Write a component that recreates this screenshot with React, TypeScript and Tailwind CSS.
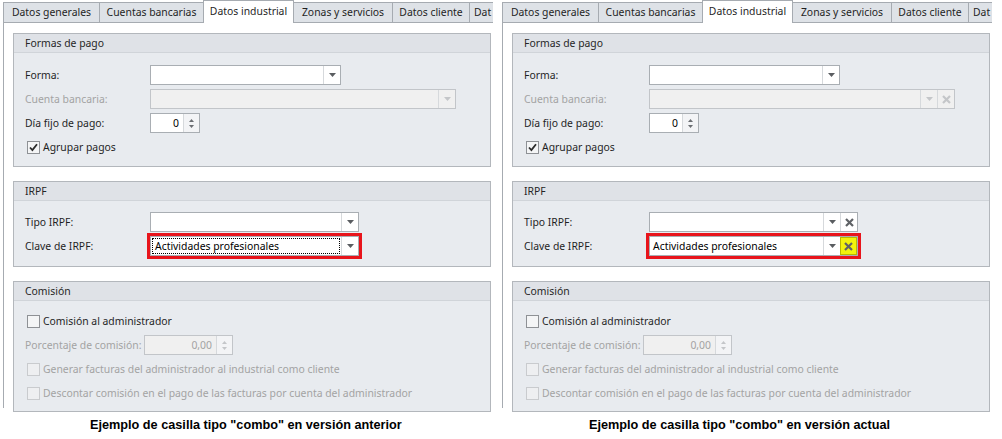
import React from 'react';

type Variant = 'old' | 'new';

const tabs = [
  { label: 'Datos generales', w: 'w-[97px]' },
  { label: 'Cuentas bancarias', w: 'w-[105px]' },
  { label: 'Datos industrial', w: 'w-[91px]', active: true },
  { label: 'Zonas y servicios', w: 'w-[100px]' },
  { label: 'Datos cliente', w: 'w-[78px]' },
  { label: 'Dat', w: 'w-[26px]', cut: true },
];

const Arrow = ({ disabled }: { disabled?: boolean }) => (
  <svg width="7" height="4" viewBox="0 0 7 4">
    <path d="M0 0h7L3.5 4z" fill={disabled ? '#c4c6c9' : '#5a5d61'} />
  </svg>
);

const Cross = ({ disabled }: { disabled?: boolean }) => (
  <svg width="9" height="9" viewBox="0 0 9 9">
    <path d="M1 1l7 7M8 1l-7 7" stroke={disabled ? '#c4c6c9' : '#5f6266'} strokeWidth="2.2" />
  </svg>
);

const DropBtn = ({ disabled }: { disabled?: boolean }) => (
  <div className="w-[17px] h-full flex items-center justify-center border-l border-[#d6d9dc]">
    <Arrow disabled={disabled} />
  </div>
);

const ClearBtn = ({ disabled, highlight }: { disabled?: boolean; highlight?: boolean }) => (
  <div
    className={`w-[17px] h-full flex items-center justify-center border-l ${
      highlight ? 'bg-[#f2f20c] border border-[#b9b900]' : 'border-[#d6d9dc]'
    }`}
  >
    <Cross disabled={disabled} />
  </div>
);

function Combo({
  width,
  value,
  disabled,
  clear,
  dotted,
  highlight,
}: {
  width: string;
  value?: string;
  disabled?: boolean;
  clear?: boolean;
  dotted?: boolean;
  highlight?: boolean;
}) {
  return (
    <div
      className={`${width} h-[20px] flex border ${
        disabled ? 'bg-[#f0f0f0] border-[#c2c5c9]' : 'bg-white border-[#a9aeb3]'
      }`}
    >
      <div className="flex-1 min-w-0 p-px">
        <div
          className={`h-full flex items-center pl-[2px] text-black whitespace-nowrap ${
            dotted ? 'border border-dotted border-black' : ''
          }`}
        >
          {value}
        </div>
      </div>
      <DropBtn disabled={disabled} />
      {clear && <ClearBtn disabled={disabled} highlight={highlight} />}
    </div>
  );
}

function Spin({ width, value, disabled }: { width: string; value: string; disabled?: boolean }) {
  return (
    <div
      className={`${width} h-[20px] flex border ${
        disabled ? 'bg-[#f0f0f0] border-[#c2c5c9]' : 'bg-white border-[#a9aeb3]'
      }`}
    >
      <div className={`flex-1 flex items-center justify-end pr-[4px] ${disabled ? 'text-[#a3a3a3]' : 'text-black'}`}>
        {value}
      </div>
      <div className="w-[16px] flex flex-col items-center justify-center gap-[3px] border-l border-[#d6d9dc] bg-[#f3f4f6]">
        <svg width="5" height="3" viewBox="0 0 5 3">
          <path d="M0 3h5L2.5 0z" fill={disabled ? '#c4c6c9' : '#6b6e72'} />
        </svg>
        <svg width="5" height="3" viewBox="0 0 5 3">
          <path d="M0 0h5L2.5 3z" fill={disabled ? '#c4c6c9' : '#6b6e72'} />
        </svg>
      </div>
    </div>
  );
}

function Check({ label, checked, disabled }: { label: string; checked?: boolean; disabled?: boolean }) {
  return (
    <div className="h-[20px] flex items-center pl-[13px] gap-[3px] whitespace-nowrap">
      <div
        className={`w-[13px] h-[13px] shrink-0 flex items-center justify-center border ${
          disabled ? 'border-[#c9cbce] bg-[#eeeff1]' : 'border-[#8e9195] bg-[#f4f5f6]'
        }`}
      >
        {checked && (
          <svg width="9" height="9" viewBox="0 0 9 9">
            <path d="M1 4.5l2.4 2.6L8 1.2" stroke="#2b2b2b" strokeWidth="1.8" fill="none" />
          </svg>
        )}
      </div>
      <span className={disabled ? 'text-[#a3a3a3]' : 'text-[#1f1f1f]'}>{label}</span>
    </div>
  );
}

function Row({ label, disabled, children }: { label: string; disabled?: boolean; children: React.ReactNode }) {
  return (
    <div className="h-[20px] flex items-center pl-[11px]">
      <span className={`w-[125px] shrink-0 whitespace-nowrap ${disabled ? 'text-[#a3a3a3]' : 'text-[#1f1f1f]'}`}>
        {label}
      </span>
      {children}
    </div>
  );
}

function Group({ title, body, children }: { title: string; body: string; children: React.ReactNode }) {
  return (
    <div className="w-[478px] border border-[#b3b7bc] bg-[#e8ebef]">
      <div className="h-[19px] flex items-center pl-[11px] bg-[#dfe2e7] border-b border-[#d0d4d9] text-[#262626]">
        {title}
      </div>
      <div className={`flex flex-col gap-[4px] ${body}`}>{children}</div>
    </div>
  );
}

function Panel({ variant }: { variant: Variant }) {
  const isNew = variant === 'new';
  return (
    <div className="w-[493px] shrink-0 flex flex-col overflow-hidden">
      <div className="h-[22px] flex items-end pl-[3px]">
        {tabs.map((t, i) => (
          <div
            key={t.label}
            className={`${t.w} shrink-0 flex items-center border-t border-l border-[#a6abb1] text-[#1f1f1f] whitespace-nowrap overflow-hidden ${
              t.cut ? 'justify-start pl-[4px]' : 'justify-center border-r'
            } ${i > 0 ? '-ml-px' : ''} ${
              t.active ? 'h-[23px] bg-white relative z-10 -mb-px pb-[2px]' : 'h-[20px] bg-[#dee2e7]'
            }`}
          >
            {t.label}
          </div>
        ))}
      </div>
      <div className="ml-[3px] h-[386px] border-l border-t border-[#a6abb1] bg-white pt-[10px] pl-[9px] flex flex-col gap-[14px]">
        <Group title="Formas de pago" body="pt-[12px] pb-[9px]">
          <Row label="Forma:">
            <Combo width="w-[191px]" />
          </Row>
          <Row label="Cuenta bancaria:" disabled>
            <Combo width="w-[306px]" disabled clear={isNew} />
          </Row>
          <Row label="Día fijo de pago:">
            <Spin width="w-[50px]" value="0" />
          </Row>
          <Check label="Agrupar pagos" checked />
        </Group>
        <Group title="IRPF" body="pt-[11px] pb-[10px]">
          <Row label="Tipo IRPF:">
            <Combo width="w-[209px]" clear={isNew} />
          </Row>
          <Row label="Clave de IRPF:">
            <div className="-m-[3px] border-[3px] border-[#e8141b]">
              <Combo
                width="w-[209px]"
                value="Actividades profesionales"
                dotted={!isNew}
                clear={isNew}
                highlight={isNew}
              />
            </div>
          </Row>
        </Group>
        <Group title="Comisión" body="pt-[10px] pb-[8px]">
          <Check label="Comisión al administrador" />
          <div className="h-[20px] flex items-center pl-[11px]">
            <span className="w-[119px] shrink-0 whitespace-nowrap text-[#a3a3a3]">Porcentaje de comisión:</span>
            <Spin width="w-[89px]" value="0,00" disabled />
          </div>
          <Check label="Generar facturas del administrador al industrial como cliente" disabled />
          <Check label="Descontar comisión en el pago de las facturas por cuenta del administrador" disabled />
        </Group>
      </div>
      <div className="pl-[90px] pt-[11px] font-['Liberation_Sans',Arial,sans-serif] font-bold text-[12.7px] text-black whitespace-nowrap">
        {isNew
          ? 'Ejemplo de casilla tipo "combo" en versión actual'
          : 'Ejemplo de casilla tipo "combo" en versión anterior'}
      </div>
    </div>
  );
}

export default function App() {
  return (
    <div className="w-[1002px] h-[439px] bg-white flex gap-[6px] overflow-hidden font-['Noto_Sans',sans-serif] text-[10.4px] leading-none">
      <Panel variant="old" />
      <Panel variant="new" />
    </div>
  );
}
